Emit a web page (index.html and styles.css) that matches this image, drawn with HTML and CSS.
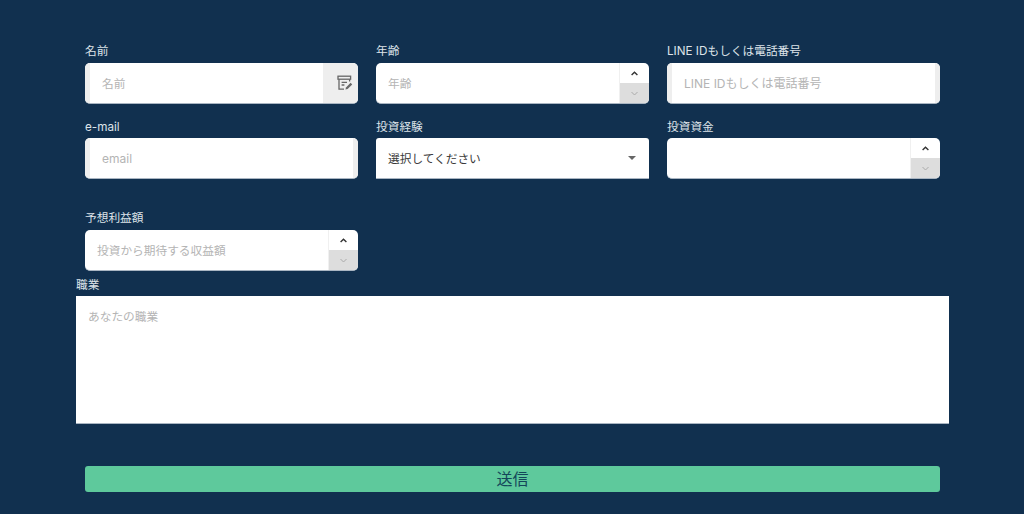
FILE: index.html
```html
<!DOCTYPE html>
<html lang="ja">
<head>
  <meta charset="UTF-8">
  <meta name="viewport" content="width=device-width, initial-scale=1.0">
  <title>お問い合わせ</title>
  <link rel="stylesheet" href="styles.css">
</head>
<body>
  <form class="form">
    <div class="grid">
      <div class="item">
        <label class="label">名前</label>
        <div class="field">
          <span class="stripe"></span>
          <input class="input" type="text" placeholder="名前">
          <span class="addon">
            <svg width="16" height="16" viewBox="0 0 16 16" fill="none" stroke="#666" stroke-width="1.3">
              <rect x="1" y="1.2" width="12.6" height="3"/>
              <path d="M2 4.2V14.2H7"/>
              <path d="M12.6 4.2V6.5"/>
              <path d="M4.6 7.4H10"/>
              <path d="M4.6 10H7.4"/>
              <path d="M8.4 14.6L9 12.4L13.6 7.8L15.2 9.4L10.6 14Z" fill="#666" stroke="none"/>
            </svg>
          </span>
        </div>
      </div>
      <div class="item">
        <label class="label">年齢</label>
        <div class="field">
          <input class="input" type="text" placeholder="年齢">
          <span class="spin">
            <span class="spin-up"><svg width="7" height="5" viewBox="0 0 7 5" fill="none" stroke="#333" stroke-width="1.4"><path d="M.6 4L3.5 1.2L6.4 4"/></svg></span>
            <span class="spin-down"><svg width="7" height="5" viewBox="0 0 7 5" fill="none" stroke="#aaa" stroke-width="1"><path d="M.5 1L3.5 4L6.5 1"/></svg></span>
          </span>
        </div>
      </div>
      <div class="item">
        <label class="label">LINE IDもしくは電話番号</label>
        <div class="field">
          <span class="stripe"></span>
          <input class="input input-latin" type="text" placeholder="LINE IDもしくは電話番号">
          <span class="stripe"></span>
        </div>
      </div>
      <div class="item">
        <label class="label label-tight">e-mail</label>
        <div class="field">
          <span class="stripe"></span>
          <input class="input input-latin" type="text" placeholder="email">
          <span class="stripe"></span>
        </div>
      </div>
      <div class="item">
        <label class="label label-tight">投資経験</label>
        <div class="field field-select">
          <span class="select-text">選択してください</span>
          <span class="caret"></span>
        </div>
      </div>
      <div class="item">
        <label class="label label-tight">投資資金</label>
        <div class="field">
          <input class="input" type="text">
          <span class="spin">
            <span class="spin-up"><svg width="7" height="5" viewBox="0 0 7 5" fill="none" stroke="#333" stroke-width="1.4"><path d="M.6 4L3.5 1.2L6.4 4"/></svg></span>
            <span class="spin-down"><svg width="7" height="5" viewBox="0 0 7 5" fill="none" stroke="#aaa" stroke-width="1"><path d="M.5 1L3.5 4L6.5 1"/></svg></span>
          </span>
        </div>
      </div>
      <div class="item item-low">
        <label class="label">予想利益額</label>
        <div class="field">
          <input class="input" type="text" placeholder="投資から期待する収益額">
          <span class="spin">
            <span class="spin-up"><svg width="7" height="5" viewBox="0 0 7 5" fill="none" stroke="#333" stroke-width="1.4"><path d="M.6 4L3.5 1.2L6.4 4"/></svg></span>
            <span class="spin-down"><svg width="7" height="5" viewBox="0 0 7 5" fill="none" stroke="#aaa" stroke-width="1"><path d="M.5 1L3.5 4L6.5 1"/></svg></span>
          </span>
        </div>
      </div>
    </div>
    <div class="wide">
      <label class="label label-wide">職業</label>
      <textarea class="textarea" placeholder="あなたの職業"></textarea>
    </div>
    <button class="button" type="button">送信</button>
  </form>
</body>
</html>
```

FILE: styles.css
```css
body {
  font-family: Inter, "Noto Sans CJK JP", sans-serif;
  font-size: 11.7px;
  background-color: #11304f;
  margin: 0;
  height: 514px;
  overflow: hidden;
}
.form {
  width: 873px;
  margin-left: 76px;
  padding-top: 42px;
}
.grid {
  display: grid;
  grid-template-columns: repeat(3, 273px);
  column-gap: 18px;
  row-gap: 13px;
  margin-left: 9px;
}
.item-low {
  margin-top: 17px;
}
.label {
  display: block;
  height: 19px;
  line-height: 19px;
  margin-bottom: 2px;
  color: #dde3e9;
}
.label-tight {
  height: 21px;
  line-height: 21px;
  margin-bottom: 0;
}
.field {
  display: flex;
  height: 41px;
  box-sizing: border-box;
  background: white;
  border-bottom: 1px solid #a9b5c2;
  border-radius: 5px;
  overflow: hidden;
}
.stripe {
  flex: none;
  width: 5px;
  background: #eeeeee;
}
.input {
  flex: 1;
  min-width: 0;
  border: none;
  outline: none;
  padding: 1px 0 0 12px;
  font: inherit;
  color: #333;
  background: transparent;
}
.input-latin {
  font-size: 12px;
}
.input::placeholder,
.textarea::placeholder {
  color: #b4b4b4;
  opacity: 1;
}
.addon {
  flex: none;
  width: 35px;
  padding-left: 8px;
  box-sizing: border-box;
  background: #eeeeee;
  display: flex;
  align-items: center;
  justify-content: center;
}
.spin {
  flex: none;
  width: 30px;
  box-sizing: border-box;
  border-left: 1px solid #f0f0f0;
  display: flex;
  flex-direction: column;
}
.spin-up,
.spin-down {
  flex: 1;
  display: flex;
  align-items: center;
  justify-content: center;
}
.spin-down {
  background: #dddddd;
}
.field-select {
  align-items: center;
  justify-content: space-between;
  padding: 0 12px 2px;
  border-radius: 3px 3px 0 0;
  color: #3a3a3a;
}
.caret {
  width: 0;
  height: 0;
  border-left: 4px solid transparent;
  border-right: 4px solid transparent;
  border-top: 4px solid #666;
  margin: 2px 1px 0 0;
}
.wide {
  margin-top: 5px;
}
.label-wide {
  margin-bottom: 1px;
}
.textarea {
  display: block;
  width: 100%;
  height: 128px;
  box-sizing: border-box;
  border: none;
  border-bottom: 1px solid #a9b5c2;
  outline: none;
  resize: none;
  padding: 13px 12px;
  font: inherit;
  line-height: 17px;
  background: white;
}
.button {
  display: block;
  width: 855px;
  height: 26px;
  margin: 42px 0 0 9px;
  background-color: #5ec99c;
  color: #14465a;
  border: none;
  border-radius: 3px;
  font-family: inherit;
  font-size: 16px;
  padding: 0 0 2px;
  cursor: pointer;
}
```
